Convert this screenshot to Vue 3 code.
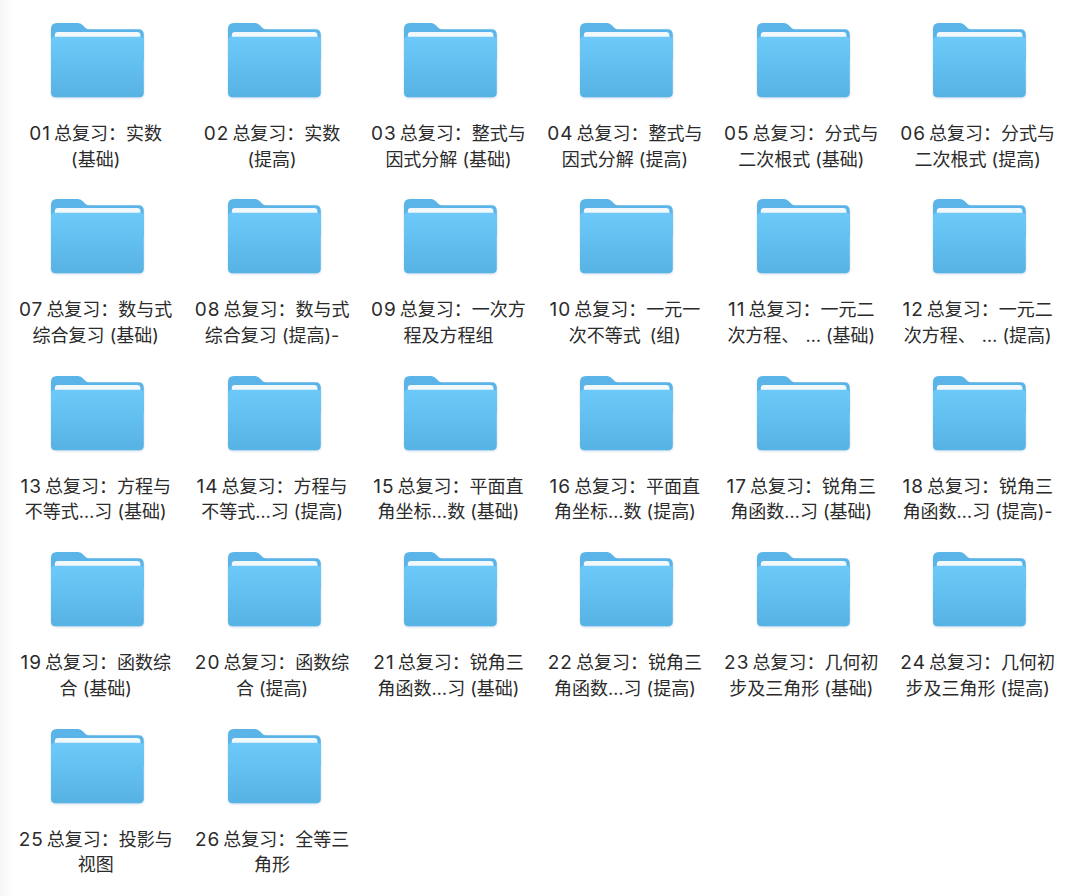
<script setup>
// 两行文件名，直接按截图里的换行写
const jichu = '(基础)'
const tigao = '(提高)'
const folders = [
  ['01', '总复习：实数', jichu],
  ['02', '总复习：实数', tigao],
  ['03', '总复习：整式与', '因式分解 ' + jichu],
  ['04', '总复习：整式与', '因式分解 ' + tigao],
  ['05', '总复习：分式与', '二次根式 ' + jichu],
  ['06', '总复习：分式与', '二次根式 ' + tigao],
  ['07', '总复习：数与式', '综合复习 ' + jichu],
  ['08', '总复习：数与式', '综合复习 ' + tigao + '-'],
  ['09', '总复习：一次方', '程及方程组'],
  ['10', '总复习：一元一', '次不等式\u2002(组)'],
  ['11', '总复习：一元二', '次方程、\u2004… ' + jichu],
  ['12', '总复习：一元二', '次方程、\u2004… ' + tigao],
  ['13', '总复习：方程与', '不等式…习 ' + jichu],
  ['14', '总复习：方程与', '不等式…习 ' + tigao],
  ['15', '总复习：平面直', '角坐标…数 ' + jichu],
  ['16', '总复习：平面直', '角坐标…数 ' + tigao],
  ['17', '总复习：锐角三', '角函数…习 ' + jichu],
  ['18', '总复习：锐角三', '角函数…习 ' + tigao + '-'],
  ['19', '总复习：函数综', '合 ' + jichu],
  ['20', '总复习：函数综', '合 ' + tigao],
  ['21', '总复习：锐角三', '角函数…习 ' + jichu],
  ['22', '总复习：锐角三', '角函数…习 ' + tigao],
  ['23', '总复习：几何初', '步及三角形 ' + jichu],
  ['24', '总复习：几何初', '步及三角形 ' + tigao],
  ['25', '总复习：投影与', '视图'],
  ['26', '总复习：全等三', '角形'],
]
</script>

<template>
  <div class="page">
    <div class="grid">
      <div v-for="f in folders" :key="f[0]" class="item">
        <svg class="folder" width="96" height="80" viewBox="0 0 96 80">
          <defs>
            <linearGradient id="front" x1="0" y1="0" x2="0" y2="1">
              <stop offset="0" stop-color="#6dcaf8" />
              <stop offset="1" stop-color="#57b2e4" />
            </linearGradient>
          </defs>
          <path d="M2 9 Q2 3 8 3 H29 Q32 3 34 5.5 L36.5 8 Q37.8 9.3 40 9.3 H89.5 Q94.8 9.3 94.8 15 V40 H2 Z" fill="#5ab4e7" />
          <path d="M5.8 15 Q5.8 12 9 12 H88 Q91.4 12 91.4 15 V30 H5.8 Z" fill="#f2f9fd" />
          <path d="M2 20.5 Q2 16.7 6 16.7 H90.8 Q94.8 16.7 94.8 20.5 V72.5 Q94.8 77.3 90 77.3 H6.8 Q2 77.3 2 72.5 Z" fill="url(#front)" />
        </svg>
        <div class="name">
          <div><span class="num">{{ f[0] }}</span>{{ f[1] }}</div>
          <div>{{ f[2] }}</div>
        </div>
      </div>
    </div>
  </div>
</template>

<style>
body {
  background: #fff;
}
</style>

<style scoped>
.page {
  width: 1080px;
  height: 896px;
  box-sizing: border-box;
  padding: 20px 12px 0 9px;
  overflow: hidden;
  background: linear-gradient(90deg, #f6f6f7 0, #fff 14px);
  font-family: Inter, "Noto Sans CJK SC", sans-serif;
}

.grid {
  display: grid;
  grid-template-columns: repeat(6, 176.4px);
  grid-auto-rows: 176.4px;
}

.item {
  display: flex;
  flex-direction: column;
  align-items: center;
}

.folder {
  display: block;
  filter: blur(0.4px) drop-shadow(0 1px 1px rgba(60, 120, 170, 0.25));
}

.name {
  margin: 21px 3px 0 0;
  font-size: 18px;
  line-height: 25.6px;
  color: #2b2b2b;
  text-align: center;
  white-space: nowrap;
}

.num {
  margin-right: 3px;
  font-size: 19px;
  line-height: 1;
  letter-spacing: 1px;
}
</style>
